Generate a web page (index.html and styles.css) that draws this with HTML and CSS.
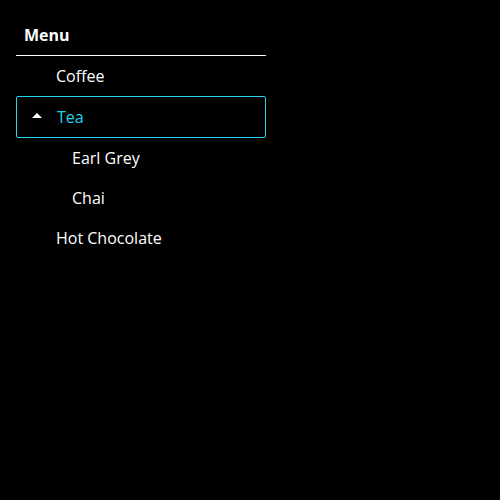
FILE: index.html
```html
<!DOCTYPE html>
<html>
<head>
<meta charset="utf-8">
<link rel="stylesheet" href="styles.css">
</head>
<body>
<nav class="menu">
  <div class="menu-title">Menu</div>
  <ul class="menu-list">
    <li class="item">Coffee</li>
    <li class="item item-open"><span class="caret"></span>Tea</li>
    <li class="item sub">Earl Grey</li>
    <li class="item sub">Chai</li>
    <li class="item">Hot Chocolate</li>
  </ul>
</nav>
</body>
</html>
```
FILE: styles.css
```css
html, body {
  margin: 0;
  background: #000;
}
body {
  padding: 16px;
  font-family: "Open Sans", "Noto Sans", sans-serif;
  color: #fff;
}
.menu {
  width: 250px;
}
.menu-title {
  font-weight: 700;
  font-size: 16px;
  line-height: 24px;
  padding: 7px 8px 8px;
  border-bottom: 1px solid #fff;
}
.menu-list {
  list-style: none;
  margin: 0;
  padding: 0;
}
.item {
  display: flex;
  align-items: center;
  height: 40px;
  padding-left: 40px;
  font-size: 16px;
  box-sizing: border-box;
  position: relative;
}
.item-open {
  height: 42px;
  padding-left: 40px;
  border: 1px solid #22d3ee;
  border-radius: 2px;
  color: #22d3ee;
}
.caret {
  position: absolute;
  left: 15px;
  top: 16px;
  width: 0;
  height: 0;
  border-left: 5px solid transparent;
  border-right: 5px solid transparent;
  border-bottom: 5px solid #fff;
}
.sub {
  padding-left: 56px;
}
```
